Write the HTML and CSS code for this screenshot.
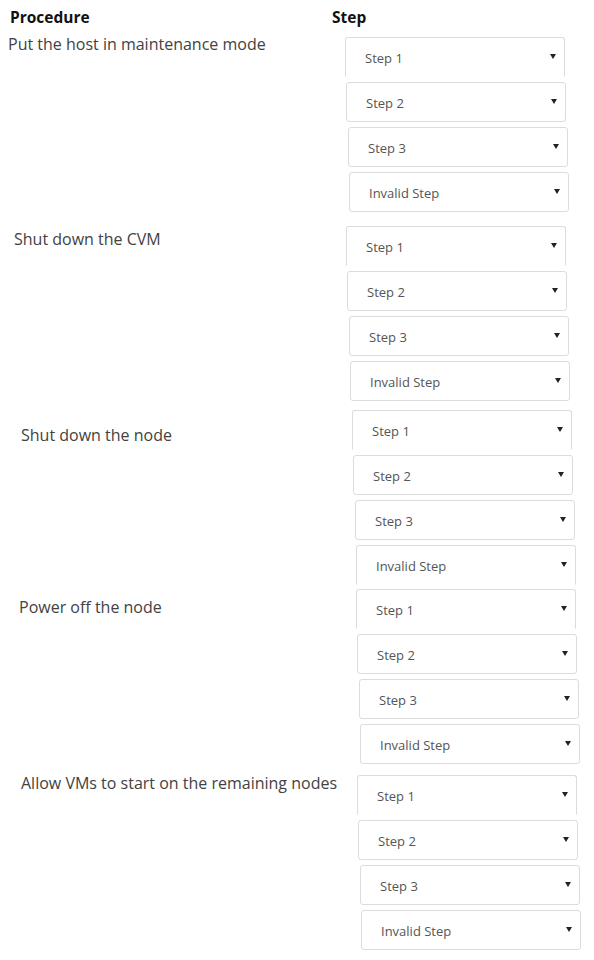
FILE: index.html
```html
<!DOCTYPE html>
<html>
<head>
<meta charset="utf-8">
<link rel="stylesheet" href="styles.css">
</head>
<body>
<div class="page">
  <div class="head">
    <div class="h-proc">Procedure</div>
    <div class="h-step">Step</div>
  </div>

  <div class="row g1">
    <div class="label">Put the host in maintenance mode</div>
    <div class="steps">
      <div class="sel first"><span>Step 1</span><i class="arr"></i></div>
      <div class="sel"><span>Step 2</span><i class="arr"></i></div>
      <div class="sel"><span>Step 3</span><i class="arr"></i></div>
      <div class="sel"><span>Invalid Step</span><i class="arr"></i></div>
    </div>
  </div>

  <div class="row g2">
    <div class="label">Shut down the CVM</div>
    <div class="steps">
      <div class="sel first"><span>Step 1</span><i class="arr"></i></div>
      <div class="sel"><span>Step 2</span><i class="arr"></i></div>
      <div class="sel"><span>Step 3</span><i class="arr"></i></div>
      <div class="sel"><span>Invalid Step</span><i class="arr"></i></div>
    </div>
  </div>

  <div class="row g3">
    <div class="label">Shut down the node</div>
    <div class="steps">
      <div class="sel first"><span>Step 1</span><i class="arr"></i></div>
      <div class="sel"><span>Step 2</span><i class="arr"></i></div>
      <div class="sel"><span>Step 3</span><i class="arr"></i></div>
      <div class="sel first"><span>Invalid Step</span><i class="arr"></i></div>
    </div>
  </div>

  <div class="row g4">
    <div class="label">Power off the node</div>
    <div class="steps">
      <div class="sel first"><span>Step 1</span><i class="arr"></i></div>
      <div class="sel"><span>Step 2</span><i class="arr"></i></div>
      <div class="sel"><span>Step 3</span><i class="arr"></i></div>
      <div class="sel"><span>Invalid Step</span><i class="arr"></i></div>
    </div>
  </div>

  <div class="row g5">
    <div class="label">Allow VMs to start on the remaining nodes</div>
    <div class="steps">
      <div class="sel first"><span>Step 1</span><i class="arr"></i></div>
      <div class="sel"><span>Step 2</span><i class="arr"></i></div>
      <div class="sel"><span>Step 3</span><i class="arr"></i></div>
      <div class="sel"><span>Invalid Step</span><i class="arr"></i></div>
    </div>
  </div>
</div>
</body>
</html>
```

FILE: styles.css
```css
html, body {
  margin: 0;
  padding: 0;
  background: #ffffff;
}

.page {
  width: 594px;
  font-family: "Open Sans", "Noto Sans", sans-serif;
  color: #444;
}

.head {
  display: grid;
  grid-template-columns: 322px 1fr;
  height: 37px;
  box-sizing: border-box;
  padding-top: 7px;
  padding-left: 10px;
  font-size: 15.5px;
  font-weight: 700;
  line-height: 20px;
  color: #111;
}

.row {
  display: grid;
  grid-template-columns: 345px 1fr;
}

.label {
  font-size: 16px;
  line-height: 14px;
  color: #424242;
  white-space: nowrap;
}

.steps {
  display: flex;
  flex-direction: column;
  gap: 5px;
}

.sel {
  width: 220px;
  height: 40px;
  box-sizing: border-box;
  border: 1px solid #dcdcdc;
  border-radius: 3px;
  display: flex;
  align-items: center;
  justify-content: space-between;
  padding: 2px 8px 0 19px;
  font-size: 13px;
  color: #555;
  background: #fff;
}

.sel.first {
  border-bottom-color: transparent;
  border-radius: 3px 3px 0 0;
}

.sel:nth-child(2) { margin-left: 1px; }
.sel:nth-child(3) { margin-left: 3px; }
.sel:nth-child(4) { margin-left: 4px; }

.arr {
  width: 0;
  height: 0;
  border-left: 3px solid transparent;
  border-right: 3px solid transparent;
  border-top: 5px solid #222;
  margin-top: -4px;
}

.g1 .label { padding-left: 8px; padding-top: 0px; }
.g1 .steps { padding-left: 0px; }

.g2 { margin-top: 14px; }
.g2 .label { padding-left: 14px; padding-top: 6px; }
.g2 .steps { padding-left: 1px; }

.g3 { margin-top: 9px; }
.g3 .label { padding-left: 21px; padding-top: 18px; }
.g3 .steps { padding-left: 7px; }

.g4 { margin-top: 4px; }
.g4 .label { padding-left: 19px; padding-top: 11px; }
.g4 .steps { padding-left: 11px; }

.g5 { margin-top: 11px; }
.g5 .label { padding-left: 21px; padding-top: 1px; }
.g5 .steps { padding-left: 12px; }
```
